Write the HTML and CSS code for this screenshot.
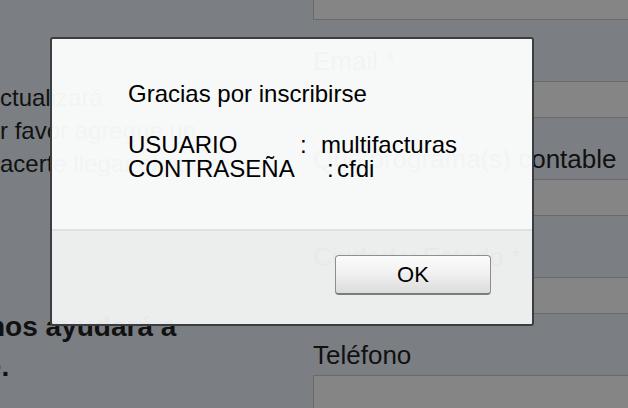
FILE: index.html
```html
<!DOCTYPE html>
<html lang="es">
<head>
<meta charset="utf-8">
<title>Registro</title>
<link rel="stylesheet" href="styles.css">
</head>
<body>
<div class="page">
  <div class="left-col">
    <p class="intro">
      <span class="line">ctualizará</span>
      <span class="line">r favor agregue un</span>
      <span class="line">acerte llegar el nuevo</span>
    </p>
    <p class="strong-note">
      <span class="line cut-n">nos ayudará a</span>
      <span class="line cut-e"><span class="link">e</span>.</span>
    </p>
  </div>
  <div class="right-col">
    <div class="field-box first"></div>
    <label class="field-label">Email *</label>
    <div class="field-box"></div>
    <label class="field-label">Qué programa(s) contable</label>
    <div class="field-box"></div>
    <label class="field-label">Ciudad y Estado *</label>
    <div class="field-box"></div>
    <label class="field-label">Teléfono</label>
    <div class="field-box"></div>
  </div>
</div>

<div class="dialog">
  <div class="dialog-body">
    <p class="dialog-title">Gracias por inscribirse</p>
    <div class="cred">
      <div class="cred-row"><span class="cred-label">USUARIO</span><span class="cred-colon">:</span><span class="cred-value">multifacturas</span></div>
      <div class="cred-row"><span class="cred-label long">CONTRASEÑA</span><span class="cred-colon short">:</span><span class="cred-value">cfdi</span></div>
    </div>
  </div>
  <div class="dialog-footer">
    <button class="ok-btn">OK</button>
  </div>
</div>
</body>
</html>
```
FILE: styles.css
```css
html, body {
  margin: 0;
  padding: 0;
}
body {
  width: 628px;
  height: 408px;
  overflow: hidden;
  background: #7b7f83;
  font-family: "Liberation Sans", Arial, Helvetica, sans-serif;
  color: #111;
  position: relative;
}
.page {
  display: grid;
  grid-template-columns: 313px 1fr;
  height: 408px;
}
.left-col {
  padding-top: 81px;
}
.intro {
  margin: 0;
  font-size: 24px;
  line-height: 33px;
}
.line {
  display: block;
  white-space: nowrap;
}
.strong-note {
  margin: 127px 0 0;
  font-size: 28px;
  font-weight: bold;
  line-height: 40px;
}
.cut-n {
  margin-left: -12px;
}
.cut-e {
  margin-left: -14px;
}
.link {
  color: #2a6fa8;
}
.right-col {
  display: flex;
  flex-direction: column;
  min-width: 0;
}
.field-box {
  height: 37px;
  box-sizing: border-box;
  border: 1px solid #6a6a6a;
  border-right: none;
  background: #858585;
  flex: none;
}
.field-box.first {
  margin-top: -17px;
}
.field-label {
  font-size: 26px;
  line-height: 30px;
  margin: 26px 0 5px;
  white-space: nowrap;
}

.dialog {
  position: absolute;
  left: 50px;
  top: 37px;
  width: 480px;
  border: 2px solid #3b3e41;
  border-radius: 3px;
  overflow: hidden;
  display: flex;
  flex-direction: column;
}
.dialog-body {
  height: 192px;
  box-sizing: border-box;
  padding: 43px 0 0 76px;
  background: rgba(252, 253, 253, 0.96);
  border-bottom: 2px solid #dfe0e0;
  color: #000;
  font-size: 24px;
  line-height: 24px;
}
.dialog-title {
  margin: 0 0 27px;
}
.cred-row {
  display: flex;
  white-space: pre;
}
.cred-label {
  width: 172px;
}
.cred-label.long {
  width: 199px;
}
.cred-colon {
  width: 21px;
}
.cred-colon.short {
  width: 10px;
}
.dialog-footer {
  height: 93px;
  box-sizing: border-box;
  padding: 24px 41px 0 0;
  background: rgba(240, 241, 241, 0.96);
  display: flex;
  justify-content: flex-end;
  align-items: flex-start;
}
.ok-btn {
  width: 156px;
  height: 40px;
  box-sizing: border-box;
  border: 1px solid #8e8e8e;
  border-bottom: 2px solid #7c7c7c;
  border-radius: 4px;
  background: linear-gradient(#fcfcfc, #f1f1f1 45%, #dcdcdc);
  font-family: "Liberation Sans", Arial, Helvetica, sans-serif;
  font-size: 22px;
  color: #000;
  padding: 0;
}
```
